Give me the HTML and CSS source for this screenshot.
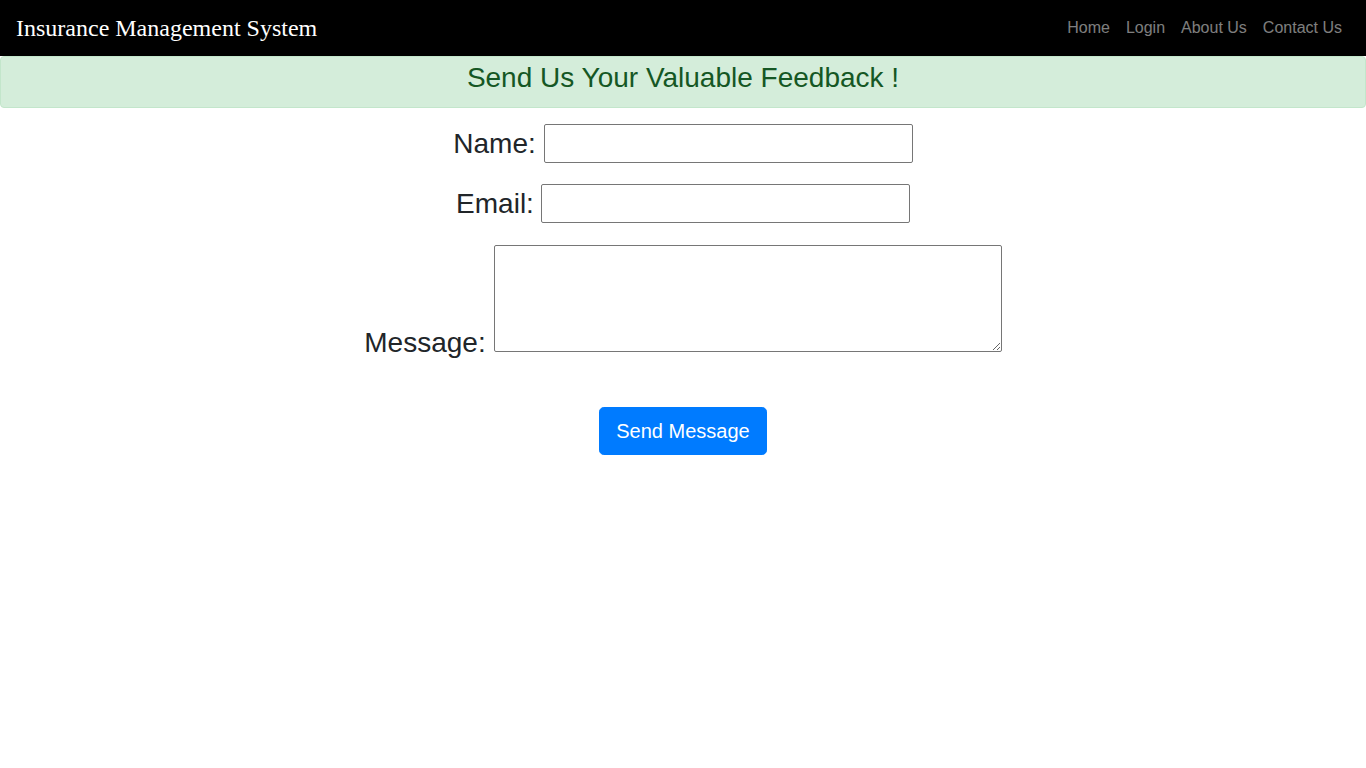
FILE: index.html
```html
<!DOCTYPE html>
<html lang="en">
<head>
<meta charset="utf-8">
<title>Insurance Management System</title>
<link rel="stylesheet" href="styles.css">
</head>
<body>
<nav class="navbar">
  <a class="brand" href="#">Insurance Management System</a>
  <ul class="nav">
    <li><a href="#">Home</a></li>
    <li><a href="#">Login</a></li>
    <li><a href="#">About Us</a></li>
    <li><a href="#">Contact Us</a></li>
  </ul>
</nav>
<div class="alert">
  <h3>Send Us Your Valuable Feedback !</h3>
</div>
<form class="feedback">
  <div class="row row-name">
    <label for="name">Name:</label>
    <input id="name" type="text" class="field">
  </div>
  <div class="row row-email">
    <label for="email">Email:</label>
    <input id="email" type="email" class="field">
  </div>
  <div class="row row-message">
    <label for="msg">Message:</label>
    <textarea id="msg" class="area"></textarea>
  </div>
  <div class="actions">
    <button type="submit" class="btn">Send Message</button>
  </div>
</form>
</body>
</html>
```
FILE: styles.css
```css
* { box-sizing: border-box; }
html, body { margin: 0; padding: 0; }
body {
  font-family: "Liberation Sans", Arial, sans-serif;
  font-size: 16px;
  color: #212529;
  background: #fff;
}
.navbar {
  height: 56px;
  background: #000;
  display: flex;
  align-items: center;
  justify-content: space-between;
  padding: 0 16px;
}
.brand {
  font-family: "Liberation Serif", "Times New Roman", serif;
  font-size: 24px;
  color: #fff;
  text-decoration: none;
}
.nav {
  list-style: none;
  margin: 0;
  padding: 0;
  display: flex;
}
.nav a {
  display: block;
  padding: 0 8px;
  color: rgba(255,255,255,.5);
  text-decoration: none;
  font-size: 16px;
}
.alert {
  background: #d4edda;
  border: 1px solid #c3e6cb;
  border-radius: 4px;
  color: #155724;
  padding: 4px 20px 12px;
  text-align: center;
  margin-bottom: 16px;
}
.alert h3 {
  margin: 0;
  font-size: 28px;
  font-weight: 400;
  line-height: 1.2;
}
.row {
  display: flex;
  justify-content: center;
  align-items: center;
  gap: 8px;
}
.row label {
  font-size: 28px;
}
.row-name label,
.row-email label { padding-top: 2px; }
.row-name { margin-bottom: 21px; }
.row-email { margin-bottom: 22px; gap: 7px; }
.field {
  width: 369px;
  height: 39px;
  border: 1px solid #767676;
  border-radius: 2px;
  font-size: 16px;
  padding: 1px 2px;
}
.row-message { align-items: flex-end; }
.row-message label {
  line-height: 1;
  margin-bottom: -5px;
}
.area {
  width: 508px;
  height: 107px;
  border: 1px solid #767676;
  border-radius: 2px;
  margin: 0;
  font-family: monospace;
}
.actions {
  text-align: center;
  margin-top: 55px;
}
.btn {
  background: #007bff;
  color: #fff;
  border: 1px solid #007bff;
  border-radius: 4.8px;
  font-family: "Liberation Sans", Arial, sans-serif;
  font-size: 20px;
  line-height: 1.5;
  padding: 8px 16px;
  cursor: pointer;
}
```
